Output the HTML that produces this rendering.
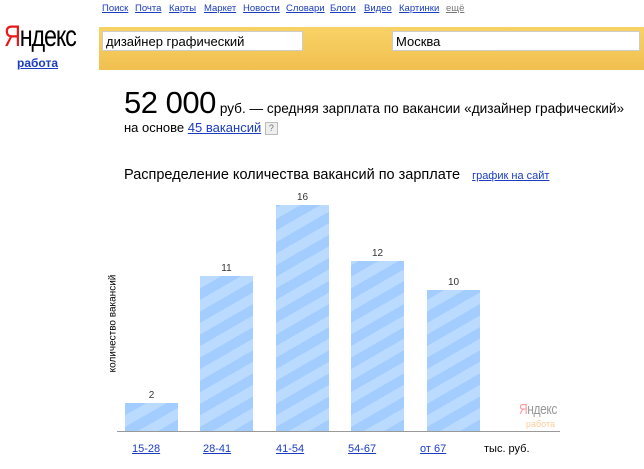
<!DOCTYPE html>
<html><head><meta charset="utf-8"><style>
body{margin:0;width:644px;height:469px;background:#fff;font-family:"Liberation Sans",Arial,sans-serif;position:relative;overflow:hidden}
a{color:#1a3dc1;text-decoration:underline}
.nav a{position:absolute;top:3px;font-size:9.5px;white-space:nowrap}
.logo{position:absolute;left:4px;top:20px;font-size:30px;letter-spacing:-1.5px;transform:scaleX(.78);transform-origin:left}
.logo span{color:#e8191b}
.rab{position:absolute;left:17px;top:56px;font-size:12px;font-weight:bold}
.band{position:absolute;left:99px;top:27px;width:545px;height:43px;background:linear-gradient(#f9d266,#f0c050)}
.in{position:absolute;top:31px;height:20px;background:#fff;border:1px solid #ccc;font-size:13px;line-height:20px;padding-left:3px;box-sizing:border-box}
.big{position:absolute;left:124px;top:85px;white-space:nowrap}
.big b{font-weight:normal;font-size:31px;letter-spacing:-.5px}
.big span{font-size:13.6px;margin-left:4px}
.on{position:absolute;left:124px;top:120px;font-size:13px}
.q{display:inline-block;width:11px;height:11px;border:1px solid #bbb;font-size:9px;text-align:center;line-height:11px;color:#777;background:#eee;vertical-align:1px}
.h{position:absolute;left:124px;top:167px;font-size:14.5px}
.h a{font-size:11px;margin-left:8px}
.bar{position:absolute;width:53px;background:repeating-linear-gradient(-30deg,#a3cdff 0 10px,#badbff 10px 20px);bottom:38px}
.v{position:absolute;width:53px;text-align:center;font-size:10px;color:#333}
.lab{position:absolute;top:443px;font-size:11px;white-space:nowrap}
.axis{position:absolute;left:117px;top:431px;width:443px;height:1px;background:#999}
.yl{position:absolute;left:53px;top:318px;font-size:10px;transform:rotate(-90deg);width:120px;text-align:center}
</style></head><body>
<div class="nav"><a style="left:102px">Поиск</a><a style="left:135px">Почта</a><a style="left:169px">Карты</a><a style="left:204px">Маркет</a><a style="left:243px">Новости</a><a style="left:286px">Словари</a><a style="left:330px">Блоги</a><a style="left:364px">Видео</a><a style="left:399px">Картинки</a><a style="left:446px;color:#777">ещё</a></div>
<div class="logo"><span>Я</span>ндекс</div>
<a class="rab">работа</a>
<div class="band"></div>
<div class="in" style="left:102px;width:201px">дизайнер графический</div>
<div class="in" style="left:392px;width:248px">Москва</div>
<div class="big"><b>52 000</b><span>руб. — средняя зарплата по вакансии «дизайнер графический»</span></div>
<div class="on">на основе <a>45 вакансий</a> <span class="q">?</span></div>
<div class="h">Распределение количества вакансий по зарплате <a>график на сайт</a></div>
<div class="yl">количество вакансий</div>
<div class="bar" style="left:125px;height:28px"></div><div class="v" style="left:125px;top:390px">2</div>
<div class="bar" style="left:200px;height:155px"></div><div class="v" style="left:200px;top:263px">11</div>
<div class="bar" style="left:276px;height:226px"></div><div class="v" style="left:276px;top:192px">16</div>
<div class="bar" style="left:351px;height:170px"></div><div class="v" style="left:351px;top:248px">12</div>
<div class="bar" style="left:427px;height:141px"></div><div class="v" style="left:427px;top:277px">10</div>
<div class="axis"></div>
<div style="position:absolute;left:519px;top:401px;font-size:15px;color:#999;transform:scaleX(.8);transform-origin:left;letter-spacing:-.5px"><span style="color:#f99">Я</span>ндекс</div>
<div style="position:absolute;left:526px;top:419px;font-size:9px;color:#fc9">работа</div>
<a class="lab" style="left:132px">15-28</a>
<a class="lab" style="left:203px">28-41</a>
<a class="lab" style="left:276px">41-54</a>
<a class="lab" style="left:348px">54-67</a>
<a class="lab" style="left:420px">от 67</a>
<div class="lab" style="left:484px">тыс. руб.</div>
</body></html>
